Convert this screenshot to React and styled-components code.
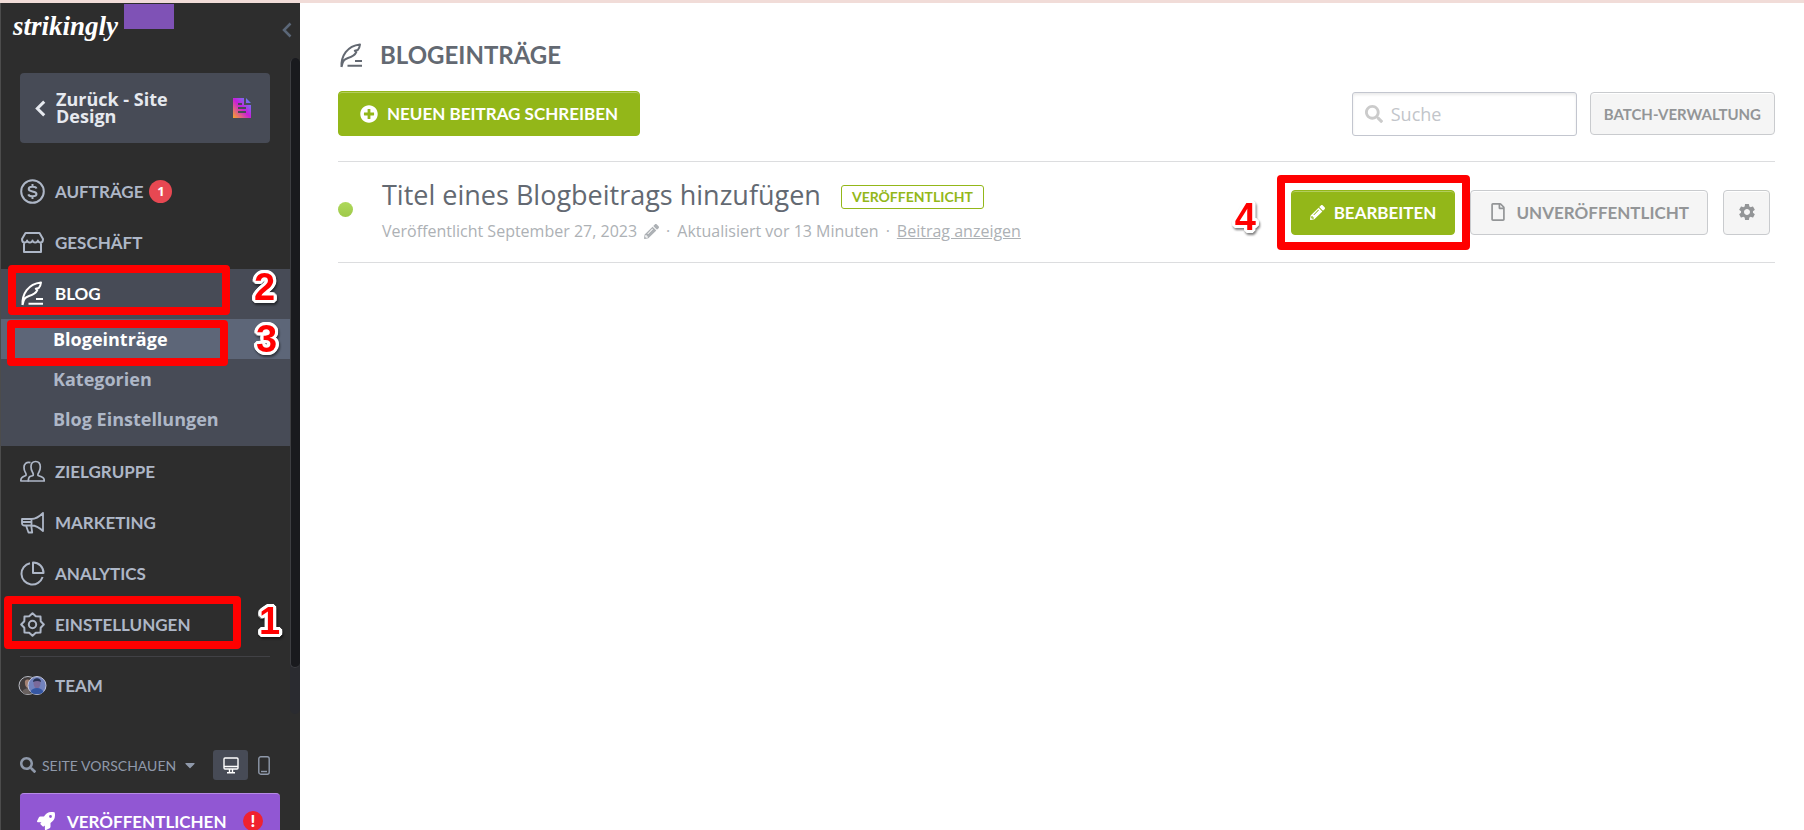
import styled, { createGlobalStyle, css } from "styled-components";
import { FaCaretDown, FaPencilAlt, FaPlusCircle, FaRegFile, FaRocket, FaSearch } from "react-icons/fa";
import { MdSettings } from "react-icons/md";

const GlobalStyle = createGlobalStyle`
  * {
    box-sizing: border-box;
  }

  body {
    margin: 0;
    background: #fff;
    font-family: "Open Sans", sans-serif;
    color: #636972;
  }

  button,
  input {
    font: inherit;
    margin: 0;
  }

  a {
    color: inherit;
    text-decoration: none;
  }

  svg {
    display: block;
    flex: none;
  }
`;

const Page = styled.div`
  display: flex;
  height: 100vh;
  overflow: hidden;
  border-top: 3px solid #f1dcd8;
`;

/* ---------- sidebar ---------- */

const Sidebar = styled.aside`
  flex: none;
  width: 300px;
  background: #2d2d2d;
  border-left: 1px solid #4c4c4c;
  color: #aeb7c7;
`;

const SidebarTop = styled.header`
  display: flex;
  align-items: flex-start;
  height: 55px;
  padding: 0 8px 0 12px;
`;

const Logo = styled.a`
  width: 104px;
  padding-top: 7px;
  font-family: "Liberation Serif", serif;
  font-size: 27px;
  font-style: italic;
  font-weight: 700;
  line-height: 32px;
  color: #fff;
`;

const PlanTag = styled.span`
  width: 50px;
  height: 25px;
  margin: 1px auto 0 7px;
  background: #7f52b6;
`;

const CollapseButton = styled.button`
  padding: 19px 0 0;
  border: 0;
  background: none;
  color: #5b6778;
`;

const Scroller = styled.div`
  display: grid;
  grid-template-columns: 1fr 10px;
`;

const ScrollTrack = styled.div`
  height: 656px;
  background: #2a2b30;
  border-radius: 5px;
`;

const ScrollThumb = styled.div`
  height: 610px;
  background: #191a1e;
  border: 1px solid #3d3e42;
  border-width: 0 0 1px 1px;
  border-radius: 5px;
`;

const BackCard = styled.a`
  display: flex;
  align-items: center;
  height: 70px;
  margin: 15px 20px 24px 19px;
  padding: 0 19px 0 15px;
  background: #474b56;
  border-radius: 4px;
  color: #e6e9ef;
`;

const BackLabel = styled.span`
  width: 130px;
  margin: 0 auto 0 10px;
  font-size: 18px;
  font-weight: 700;
  line-height: 17px;
`;

const NavList = styled.ul`
  display: flex;
  flex-direction: column;
  gap: 1px;
  margin: 0;
  padding: 0;
  list-style: none;
`;

const NavItem = styled.li`
  position: relative;
`;

const NavLink = styled.a`
  display: flex;
  align-items: center;
  gap: 10px;
  height: 50px;
  padding: 0 0 2px 19px;
  font-family: Lato, sans-serif;
  font-size: 17px;
  font-weight: 700;

  ${(props) =>
    props.$active &&
    css`
      background: #474b56;
      color: #fff;
    `}
`;

const NavBadge = styled.span`
  width: 23px;
  height: 23px;
  margin-left: -4px;
  border-radius: 50%;
  background: #e74852;
  color: #fff;
  font-family: "Open Sans", sans-serif;
  font-size: 13px;
  line-height: 22px;
  text-align: center;
`;

const SubList = styled.ul`
  margin: 0;
  padding: 0 0 7px;
  list-style: none;
  background: #474b56;
`;

const SubLink = styled.a`
  display: block;
  padding-left: 52px;
  font-size: 18px;
  font-weight: 700;
  line-height: 40px;
  ${(props) =>
    props.$active &&
    css`
      background: #5d6678;
      color: #fff;
    `}
`;

const Divider = styled.hr`
  margin: 6px 20px 4px 19px;
  border: 0;
  border-top: 1px solid #414145;
`;

const SidebarFooter = styled.footer`
  padding: 36px 20px 0 19px;
`;

const PreviewBar = styled.div`
  display: flex;
  align-items: center;
  height: 30px;
`;

const PreviewButton = styled.button`
  display: flex;
  align-items: center;
  gap: 6px;
  margin-right: auto;
  padding: 0;
  border: 0;
  background: none;
  color: #8f99aa;
  font-family: Lato, sans-serif;
  font-size: 14px;
`;

const DeviceButton = styled.button`
  display: flex;
  align-items: center;
  justify-content: center;
  width: ${(props) => (props.$active ? 35 : 32)}px;
  height: 30px;
  padding: 0;
  border: 0;
  border-radius: 3px;
  background: ${(props) => (props.$active ? "#474b56" : "none")};
  color: ${(props) => (props.$active ? "#fff" : "#8f99aa")};
`;

const PublishButton = styled.button`
  display: flex;
  align-items: center;
  width: 100%;
  height: 55px;
  margin-top: 13px;
  padding: 0 17px;
  border: 0;
  border-top: 1px solid #b68be6;
  border-radius: 4px;
  background: #9157d3;
  color: #fff;
  font-family: Lato, sans-serif;
  font-size: 17px;
  font-weight: 700;
`;

const PublishLabel = styled.span`
  margin: 0 auto 0 12px;
`;

const Alert = styled.span`
  width: 20px;
  height: 20px;
  border-radius: 50%;
  background: #f0222f;
  font-weight: 900;
  line-height: 20px;
  text-align: center;
`;

/* ---------- content ---------- */

const Main = styled.main`
  flex: 1;
  min-width: 0;
  padding: 32px 29px 0 38px;
`;

const Heading = styled.h1`
  display: flex;
  align-items: center;
  gap: 16px;
  margin: 0 0 16px;
  padding-left: 1px;
  font-family: Lato, sans-serif;
  font-size: 24px;
  font-weight: 700;
  line-height: 40px;
`;

const Toolbar = styled.div`
  display: flex;
  align-items: center;
  gap: 13px;
  padding-bottom: 25px;
`;

const Button = styled.button`
  display: flex;
  align-items: center;
  justify-content: center;
  gap: 9px;
  height: 45px;
  padding: 0 ${(props) => (props.$wide ? 21 : 18)}px;
  border: 1px solid #c9cbce;
  border-radius: 4px;
  background: #f5f5f5;
  box-shadow: inset 0 1px 0 #fff;
  color: #939597;
  font-family: Lato, sans-serif;
  font-size: 17px;
  font-weight: 700;
  white-space: nowrap;

  ${(props) =>
    props.$primary &&
    css`
      border-color: #93b719;
      background: #93b719;
      box-shadow: inset 0 1px 0 #b3cd5e;
      color: #fff;
    `}

  ${(props) =>
    props.$small &&
    css`
      height: 43px;
      padding: 0 13px;
      font-size: 15px;
    `}

  ${(props) =>
    props.$square &&
    css`
      width: 47px;
      padding: 0;
    `}
`;

const SearchBox = styled.label`
  display: flex;
  align-items: center;
  gap: 8px;
  width: 225px;
  height: 44px;
  margin-left: auto;
  padding: 0 12px;
  border: 1px solid #c3c6cf;
  border-radius: 3px;
  box-shadow: inset 0 2px 3px #ebebeb;
  color: #cbcbcb;
`;

const SearchInput = styled.input`
  width: 100%;
  padding: 0;
  border: 0;
  outline: 0;
  background: none;
  font-size: 18px;

  &::placeholder {
    color: #c2c5ca;
  }
`;

const PostRow = styled.article`
  display: flex;
  align-items: center;
  height: 102px;
  padding-right: 5px;
  border: 1px solid #dcdddf;
  border-width: 1px 0;
`;

const StatusDot = styled.span`
  width: 15px;
  height: 15px;
  margin: 0 29px 6px 0;
  border-radius: 50%;
  background: linear-gradient(#aed95b, #9fc94a);
`;

const PostInfo = styled.div`
  margin-right: auto;
`;

const TitleLine = styled.div`
  display: flex;
  align-items: center;
  gap: 20px;
`;

const PostTitle = styled.h2`
  margin: 0;
  font-size: 27px;
  font-weight: 400;
  line-height: 38px;
`;

const StatusBadge = styled.span`
  margin-top: 4px;
  padding: 0 10px;
  border: 1px solid #93b719;
  border-radius: 3px;
  color: #93b719;
  font-family: Lato, sans-serif;
  font-size: 14px;
  font-weight: 700;
  line-height: 22px;
`;

const Meta = styled.div`
  display: flex;
  align-items: center;
  gap: 7px;
  font-size: 16px;
  line-height: 34px;
  color: #adb1b5;

  a {
    text-decoration: underline;
  }
`;

const Actions = styled.div`
  display: flex;
  gap: 15px;
`;

const Marked = styled.div`
  position: relative;
`;

/* ---------- tutorial markers ---------- */

const MarkerBox = styled.span`
  position: absolute;
  z-index: 1;
  top: ${(props) => props.$top}px;
  left: ${(props) => props.$left}px;
  width: ${(props) => props.$width}px;
  height: ${(props) => props.$height}px;
  border: 8px solid #f00;
  border-radius: 4px;
  pointer-events: none;
`;

const MarkerNumber = styled.span`
  position: absolute;
  z-index: 2;
  top: ${(props) => props.$top}px;
  left: ${(props) => props.$left}px;
  font-family: "Liberation Sans", sans-serif;
  font-size: 38px;
  font-weight: 700;
  line-height: 40px;
  color: #f00;
  /* round white outline */
  text-shadow:
    3px 0 #fff, -3px 0 #fff, 0 3px #fff, 0 -3px #fff,
    2px 2px #fff, -2px 2px #fff, 2px -2px #fff, -2px -2px #fff,
    3px 1px #fff, 3px -1px #fff, -3px 1px #fff, -3px -1px #fff,
    1px 3px #fff, -1px 3px #fff, 1px -3px #fff, -1px -3px #fff;
  filter: drop-shadow(1px 2px 1px rgba(0, 0, 0, 0.5));
  pointer-events: none;
`;

/* ---------- icons ---------- */

function LineIcon({ size = 25, children }) {
  return (
    <svg
      width={size}
      height={size}
      viewBox="0 0 25 25"
      fill="none"
      stroke="currentColor"
      strokeWidth="2"
      strokeLinejoin="round"
      aria-hidden="true"
    >
      {children}
    </svg>
  );
}

function Chevron({ width, height, stroke }) {
  return (
    <svg width={width} height={height} viewBox="0 0 10 16" fill="none" aria-hidden="true">
      <path d="M8.500 1.500 2 8l6.500 6.500" stroke="currentColor" strokeWidth={stroke} />
    </svg>
  );
}

function CoinIcon() {
  return (
    <LineIcon>
      <circle cx="12.500" cy="12.500" r="11.300" />
      <path d="M16.500 9.500C16 8.200 14.800 7.800 12.500 7.800c-2.500 0-3.800.7-3.800 2.300 0 1.700 1.500 2 3.800 2.400 2.500.4 4 .8 4 2.500 0 1.600-1.500 2.300-4 2.300-2.300 0-3.700-.6-4.200-2M12.500 5v3M12.500 17v3" />
    </LineIcon>
  );
}

function ShopIcon() {
  return (
    <LineIcon>
      <path d="M5.500 3h14l3.500 6c0 3-1 3.500-2.500 3.500-1.700 0-2.600-1.500-2.600-2 0 .5-1 2-2.700 2S12.500 11 12.500 10.500c0 .5-1 2-2.700 2s-2.700-1.500-2.700-2c0 .5-.9 2-2.600 2C3 12.500 2 12 2 9zM4 13v9h17v-9" />
    </LineIcon>
  );
}

function FeatherIcon() {
  return (
    <LineIcon>
      <path d="M2.500 24C2 13 8 3 21 1.500c-.2 2-1 4-2.200 5.500l-3 .8 1.500 1.200c-1.500 3.500-5 5-8.300 6-3 1-5.500 2-6.500 9M16 18h7M8.500 22.800H23" />
    </LineIcon>
  );
}

function PeopleIcon() {
  return (
    <LineIcon>
      <g strokeWidth="1.700">
        <path d="M10 17.500c-1.200.7-1.700 1.300-1.700 4.500h16c0-3.500-2-4-6.300-5.500-.5-1.200.2-2.200 1-3.500 1-1.600 1.300-3 1.300-5.200 0-3.400-1.600-5.300-4.600-5.300S11 4.400 11 7.800c0 2.200.4 3.600 1.400 5.200.8 1.300 1.200 2.300.7 3.500-1 .4-2.300.6-3.100 1z" />
        <path d="M10.500 3.600C6.200 2.600 4 5 4 8.500c0 2 .3 3.200 1.200 4.600.8 1.300 1.200 2.200.7 3.400C2.500 18 .8 18.500.8 22h8" />
      </g>
    </LineIcon>
  );
}

function MegaphoneIcon() {
  return (
    <LineIcon>
      <g strokeWidth="1.800">
        <path d="M2 9h9.500C16 9 19.500 6.500 23 3v18c-3.500-3.300-7-5.500-11.500-5.500H4C2.600 15.500 2 14.500 2 13zM11.500 9v6.500M6 15.500l2.500 7h3.700l-1-7M2 12h9.500" />
      </g>
    </LineIcon>
  );
}

function PieIcon() {
  return (
    <LineIcon>
      <path d="M10 2.200A10.800 10.800 0 1 0 22.600 16" />
      <path d="M13 1.500c6 0 10.500 4.500 10.500 10.500H13z" />
    </LineIcon>
  );
}

function GearIcon() {
  return (
    <LineIcon>
      <path d="M12.500 1.200 15.800 4.300 20.500 4.500 20.700 9.200 23.800 12.500 20.700 15.800 20.500 20.500 15.800 20.700 12.500 23.800 9.200 20.700 4.500 20.500 4.300 15.800 1.200 12.500 4.300 9.200 4.500 4.500 9.200 4.300z" />
      <circle cx="12.500" cy="12.500" r="3.700" />
    </LineIcon>
  );
}

function TeamIcon() {
  return (
    <svg width="25" height="21" viewBox="2 0 25 21" overflow="visible" aria-hidden="true">
      <circle cx="10" cy="10.500" r="9" fill="#403b3b" stroke="#b9bcc4" />
      <path d="M7 6c2-2.500 6-1.500 6 2 0 3-1.500 5-3 5-2 0-3.500-3-3-7z" fill="#a38172" />
      <path d="M4 17c1.500-3 4-4 7-4l1 6c-3 .6-6 0-8-2z" fill="#69615f" />
      <circle cx="19" cy="10.500" r="9" fill="#7182bd" stroke="#c2c6dc" />
      <path d="M15.500 7c0-4 7-4 7 0 0 4-1.500 6.500-3.500 6.500S15.500 11 15.500 7z" fill="#7b6a9a" />
      <path d="M15 7c0-5 8-5 8 0-2.500-1.500-5-1.500-8 0z" fill="#293253" />
      <path d="M12.500 17c1-3 3.500-4 6.500-4s5 1 6.500 4c-3.500 3-9.500 3-13 0z" fill="#3557a3" />
    </svg>
  );
}

function SiteIcon() {
  return (
    <svg width="18" height="20" viewBox="0 0 18 20" aria-hidden="true">
      <defs>
        <linearGradient id="site" x1="0" y1="1" x2="1" y2="0">
          <stop offset="0" stopColor="#f9a825" />
          <stop offset="0.500" stopColor="#c81ddb" />
          <stop offset="1" stopColor="#4d9bff" />
        </linearGradient>
      </defs>
      <path d="M0 0h11v7h7v13H0zM13 0l5 5h-5z" fill="url(#site)" />
      <path d="M5 6h4M5 10h8M5 14h8" stroke="#474b56" strokeWidth="2" />
    </svg>
  );
}

function MonitorIcon() {
  return (
    <svg width="16" height="17" viewBox="0 0 16 17" fill="none" stroke="currentColor" aria-hidden="true">
      <rect x="1" y="1" width="14" height="11" rx="1" strokeWidth="1.400" />
      <path d="M1 9.500h14M6.500 12v3M9.500 12v3M4 15.800h8" strokeWidth="1.400" />
    </svg>
  );
}

function PhoneIcon() {
  return (
    <svg width="12" height="19" viewBox="0 0 12 19" fill="none" stroke="currentColor" aria-hidden="true">
      <rect x="0.800" y="0.800" width="10.400" height="17.400" rx="2" strokeWidth="1.400" />
      <path d="M3 15.500h6" strokeWidth="1.400" />
    </svg>
  );
}

const mainLinks = [
  { label: "AUFTRÄGE", icon: CoinIcon, badge: 1 },
  { label: "GESCHÄFT", icon: ShopIcon },
];

const lowerLinks = [
  { label: "ZIELGRUPPE", icon: PeopleIcon },
  { label: "MARKETING", icon: MegaphoneIcon },
  { label: "ANALYTICS", icon: PieIcon },
];

const blogLinks = ["Blogeinträge", "Kategorien", "Blog Einstellungen"];

function NavEntry({ label, icon: Icon, badge }) {
  return (
    <NavItem>
      <NavLink href="#">
        <Icon />
        {label}
        {badge && <NavBadge>{badge}</NavBadge>}
      </NavLink>
    </NavItem>
  );
}

function SiteSidebar() {
  return (
    <Sidebar>
      <SidebarTop>
        <Logo href="#">strikingly</Logo>
        <PlanTag />
        <CollapseButton aria-label="Menü einklappen">
          <Chevron width={10} height={16} stroke={2.5} />
        </CollapseButton>
      </SidebarTop>
      <Scroller>
        <nav>
          <BackCard href="#">
            <Chevron width={11} height={17} stroke={2.8} />
            <BackLabel>Zurück - Site Design</BackLabel>
            <SiteIcon />
          </BackCard>
          <NavList>
            {mainLinks.map((link) => (
              <NavEntry key={link.label} {...link} />
            ))}
            <NavItem>
              <NavLink href="#" $active>
                <FeatherIcon />
                BLOG
              </NavLink>
              <MarkerBox $top={-4} $left={7} $width={222} $height={50} />
              <MarkerNumber $top={-2} $left={253}>2</MarkerNumber>
              <SubList>
                {blogLinks.map((label, i) => (
                  <li key={label}>
                    <SubLink href="#" $active={i === 0}>
                      {label}
                    </SubLink>
                  </li>
                ))}
              </SubList>
              <MarkerBox $top={51} $left={6} $width={221} $height={46} />
              <MarkerNumber $top={50} $left={255}>3</MarkerNumber>
            </NavItem>
            {lowerLinks.map((link) => (
              <NavEntry key={link.label} {...link} />
            ))}
            <NavItem>
              <NavLink href="#">
                <GearIcon />
                EINSTELLUNGEN
              </NavLink>
              <MarkerBox $top={-4} $left={3} $width={237} $height={53} />
              <MarkerNumber $top={1} $left={258}>1</MarkerNumber>
            </NavItem>
          </NavList>
          <Divider />
          <NavLink href="#">
            <TeamIcon />
            TEAM
          </NavLink>
        </nav>
        <ScrollTrack>
          <ScrollThumb />
        </ScrollTrack>
      </Scroller>
      <SidebarFooter>
        <PreviewBar>
          <PreviewButton>
            <FaSearch size={16} />
            SEITE VORSCHAUEN
            <FaCaretDown size={16} />
          </PreviewButton>
          <DeviceButton $active aria-label="Desktop">
            <MonitorIcon />
          </DeviceButton>
          <DeviceButton aria-label="Handy">
            <PhoneIcon />
          </DeviceButton>
        </PreviewBar>
        <PublishButton>
          <FaRocket size={18} />
          <PublishLabel>VERÖFFENTLICHEN</PublishLabel>
          <Alert>!</Alert>
        </PublishButton>
      </SidebarFooter>
    </Sidebar>
  );
}

function App() {
  return (
    <>
      <GlobalStyle />
      <Page>
        <SiteSidebar />
        <Main>
          <Heading>
            <FeatherIcon />
            BLOGEINTRÄGE
          </Heading>
          <Toolbar>
            <Button $primary $wide>
              <FaPlusCircle size={18} />
              NEUEN BEITRAG SCHREIBEN
            </Button>
            <SearchBox>
              <FaSearch size={18} />
              <SearchInput type="search" placeholder="Suche" aria-label="Suche" />
            </SearchBox>
            <Button $small>BATCH-VERWALTUNG</Button>
          </Toolbar>
          <PostRow>
            <StatusDot />
            <PostInfo>
              <TitleLine>
                <PostTitle>Titel eines Blogbeitrags hinzufügen</PostTitle>
                <StatusBadge>VERÖFFENTLICHT</StatusBadge>
              </TitleLine>
              <Meta>
                Veröffentlicht September 27, 2023
                <FaPencilAlt size={15} />
                <span>·</span>
                <span>Aktualisiert vor 13 Minuten</span>
                <span>·</span>
                <a href="#">Beitrag anzeigen</a>
              </Meta>
            </PostInfo>
            <Actions>
              <Marked>
                <Button $primary>
                  <FaPencilAlt size={15} />
                  BEARBEITEN
                </Button>
                <MarkerBox $top={-15} $left={-14} $width={193} $height={75} />
                <MarkerNumber $top={7} $left={-56}>4</MarkerNumber>
              </Marked>
              <Button>
                <FaRegFile size={18} />
                UNVERÖFFENTLICHT
              </Button>
              <Button $square aria-label="Einstellungen">
                <MdSettings size={20} />
              </Button>
            </Actions>
          </PostRow>
        </Main>
      </Page>
    </>
  );
}

export default App;
